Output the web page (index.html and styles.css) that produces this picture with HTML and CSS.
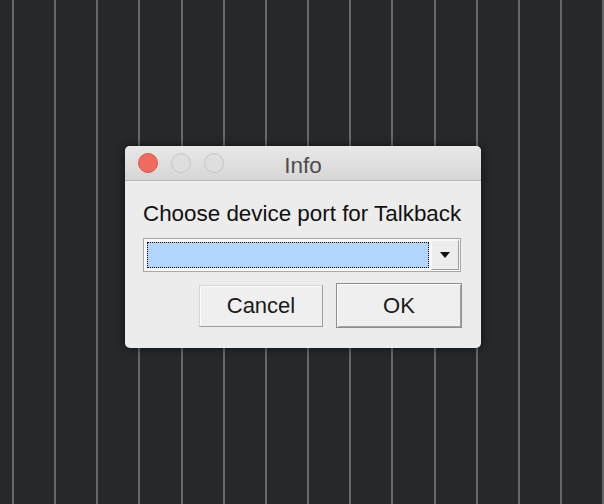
FILE: index.html
```html
<!DOCTYPE html>
<html lang="en">

<head>
    <meta charset="UTF-8">
    <title>Info</title>
    <link rel="stylesheet" href="styles.css">
</head>

<body>

    <div class="dialog">
        <header class="titlebar">
            <div class="lights">
                <span class="light close"></span>
                <span class="light"></span>
                <span class="light"></span>
            </div>
            <h1 class="title">Info</h1>
            <div></div>
        </header>

        <section class="content">
            <p class="prompt">Choose device port for Talkback</p>

            <div class="combo">
                <div class="combo-field">
                    <div class="combo-value"></div>
                </div>
                <button class="combo-arrow"><span class="triangle"></span></button>
            </div>

            <nav class="actions">
                <button class="btn">Cancel</button>
                <button class="btn btn-default">OK</button>
            </nav>
        </section>
    </div>

</body>

</html>
```

FILE: styles.css
```css
html,
body {
    height: 100%;
}

body {
    margin: 0;
    padding: 146px 0 0 125px;
    box-sizing: border-box;
    font-family: "Liberation Sans", Arial, sans-serif;
    background-color: #25292c;
    background-image: repeating-linear-gradient(to right, transparent 0px, transparent 12px, #66696c 12px, #66696c 14px, transparent 14px, transparent 42.15px);
}

.dialog {
    width: 356px;
    height: 202px;
    border-radius: 5px;
    overflow: hidden;
    background: #ececec;
    box-shadow: 0 0 10px rgba(0, 0, 0, 0.55);
}

.titlebar {
    height: 34px;
    display: grid;
    grid-template-columns: 1fr auto 1fr;
    align-items: center;
    background: linear-gradient(#e8e8e8, #d6d6d6);
    border-bottom: 1px solid #b6b6b6;
}

.lights {
    display: flex;
    gap: 13px;
    padding-left: 13px;
}

.light {
    width: 18px;
    height: 18px;
    border-radius: 50%;
    background: #dedede;
    border: 1px solid #c6c6c6;
}

.light.close {
    background: #ee6b60;
    border-color: #d9574d;
}

.title {
    margin: 0;
    padding-top: 6px;
    font-size: 22.5px;
    line-height: 28px;
    font-weight: normal;
    color: #4d4d4d;
}

.content {
    padding: 20px 20px 20px 18px;
}

.prompt {
    margin: 0;
    font-size: 22.4px;
    line-height: 26px;
    white-space: nowrap;
    color: #111;
}

.combo {
    margin-top: 11px;
    height: 34px;
    box-sizing: border-box;
    display: flex;
    padding: 1px;
    border: 1px solid #a8a8a8;
    background: #f7f7f7;
}

.combo-field {
    flex: 1;
    padding: 2px;
}

.combo-value {
    height: 100%;
    box-sizing: border-box;
    border: 1px dotted #000;
    background: #b3d6fe;
}

.combo-arrow {
    width: 28px;
    margin: 0;
    padding: 0;
    display: flex;
    align-items: center;
    justify-content: center;
    background: #ededed;
    border: 1px solid;
    border-color: #f8f8f8 #9c9c9c #9c9c9c #f8f8f8;
}

.triangle {
    width: 0;
    height: 0;
    border-left: 5px solid transparent;
    border-right: 5px solid transparent;
    border-top: 6px solid #111;
}

.actions {
    margin-top: 11px;
    display: flex;
    justify-content: flex-end;
    align-items: center;
    gap: 13px;
    margin-right: -1px;
}

.btn {
    width: 124px;
    height: 42px;
    margin: 0;
    padding: 0;
    font-family: inherit;
    font-size: 22px;
    color: #1a1a1a;
    background: #efefef;
    border: 1px solid;
    border-color: #d6d6d6 #9c9c9c #9c9c9c #d6d6d6;
    box-shadow: inset 1px 1px 0 #fbfbfb;
}

.btn-default {
    width: 126px;
    height: 45px;
    border: 1px solid #8e8e8e;
    box-shadow: inset 1px 1px 0 #fbfbfb, inset -1px -1px 0 #a4a4a4;
}
```
